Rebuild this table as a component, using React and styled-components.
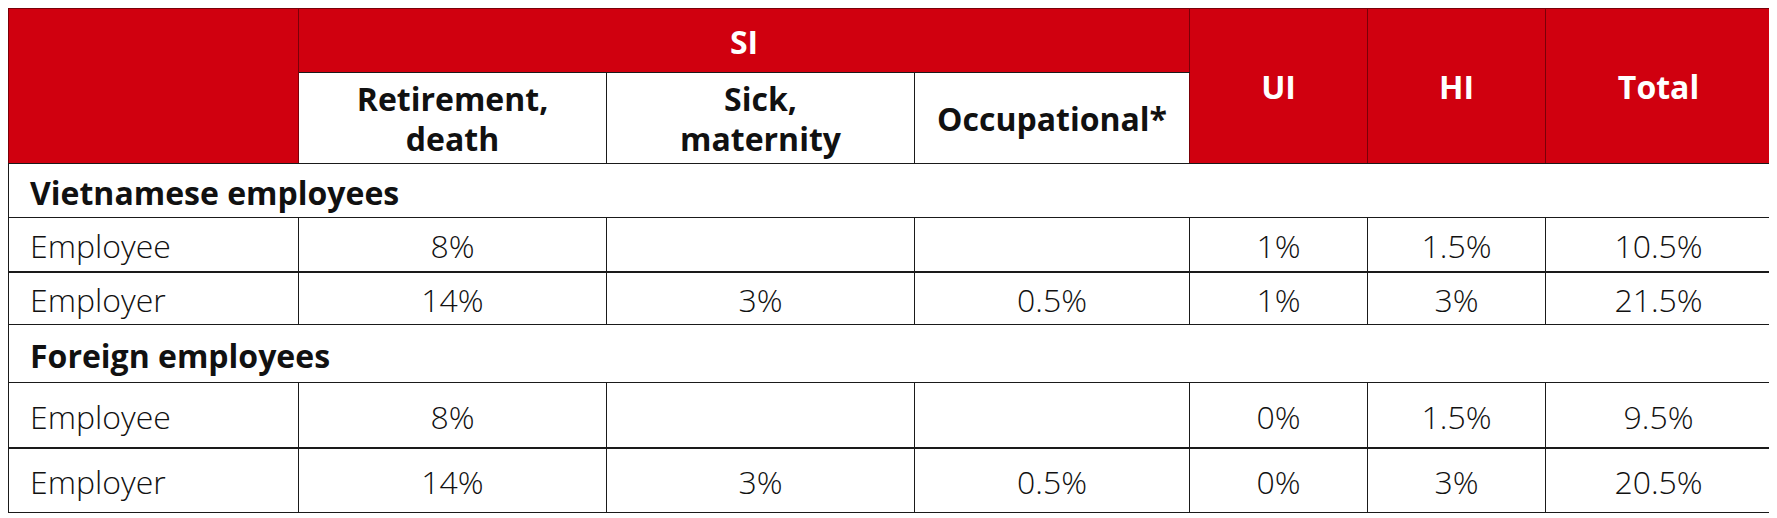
import styled, { createGlobalStyle } from 'styled-components';

const GlobalStyle = createGlobalStyle`
  body {
    margin: 8px;
    background: #fff;
    font-family: "Open Sans", "Liberation Sans", sans-serif;
    color: #111;
  }
`;

const RED = '#d0000f';
const LINE = '#1a1a1a';

const Table = styled.table`
  width: 1763px;
  table-layout: fixed;
  border-collapse: collapse;
  border: 1px solid ${LINE};
  font-size: 32px;
  line-height: 40px;
`;

const HeadCell = styled.th`
  background: ${({ $red }) => ($red ? RED : '#fff')};
  color: ${({ $red }) => ($red ? '#fff' : '#111')};
  font-weight: 700;
  text-align: center;
  vertical-align: middle;
  padding: 2px 8px 0;
  border: 1px solid ${({ $red }) => ($red ? '#7a0008' : LINE)};
  border-bottom-color: ${LINE};
`;

const Row = styled.tr`
  height: ${({ $h }) => $h}px;
`;

const GroupCell = styled.td`
  font-weight: 700;
  padding: 4px 0 0 21px;
  border: 1px solid ${LINE};
`;

const Cell = styled.td`
  text-align: ${({ $left }) => ($left ? 'left' : 'center')};
  padding: ${({ $left }) => ($left ? '4px 0 0 21px' : '4px 0 0')};
  border: 1px solid ${LINE};
  border-top-width: ${({ $thick }) => ($thick ? 2 : 1)}px;
  font-weight: 300;
`;

const widths = [290, 308, 308, 275, 178, 178, 226];

const groups = [
  {
    title: 'Vietnamese employees',
    h: 54,
    rows: [
      { label: 'Employee', h: 54, values: ['8%', '', '', '1%', '1.5%', '10.5%'] },
      { label: 'Employer', h: 53, thick: true, values: ['14%', '3%', '0.5%', '1%', '3%', '21.5%'] },
    ],
  },
  {
    title: 'Foreign employees',
    h: 58,
    rows: [
      { label: 'Employee', h: 65, values: ['8%', '', '', '0%', '1.5%', '9.5%'] },
      { label: 'Employer', h: 65, thick: true, values: ['14%', '3%', '0.5%', '0%', '3%', '20.5%'] },
    ],
  },
];

export default function App() {
  return (
    <>
      <GlobalStyle />
      <Table>
        <colgroup>
          {widths.map((w, i) => (
            <col key={i} style={{ width: w }} />
          ))}
        </colgroup>
        <thead>
          <Row $h={64}>
            <HeadCell $red rowSpan={2} />
            <HeadCell $red colSpan={3}>SI</HeadCell>
            <HeadCell $red rowSpan={2}>UI</HeadCell>
            <HeadCell $red rowSpan={2}>HI</HeadCell>
            <HeadCell $red rowSpan={2}>Total</HeadCell>
          </Row>
          <Row $h={91}>
            <HeadCell>Retirement,<br />death</HeadCell>
            <HeadCell>Sick,<br />maternity</HeadCell>
            <HeadCell>Occupational*</HeadCell>
          </Row>
        </thead>
        <tbody>
          {groups.map((g) => [
            <Row key={g.title} $h={g.h}>
              <GroupCell colSpan={7}>{g.title}</GroupCell>
            </Row>,
            ...g.rows.map((r, i) => (
              <Row key={g.title + i} $h={r.h}>
                <Cell $left $thick={r.thick}>{r.label}</Cell>
                {r.values.map((v, j) => (
                  <Cell key={j} $thick={r.thick}>{v}</Cell>
                ))}
              </Row>
            )),
          ])}
        </tbody>
      </Table>
    </>
  );
}
